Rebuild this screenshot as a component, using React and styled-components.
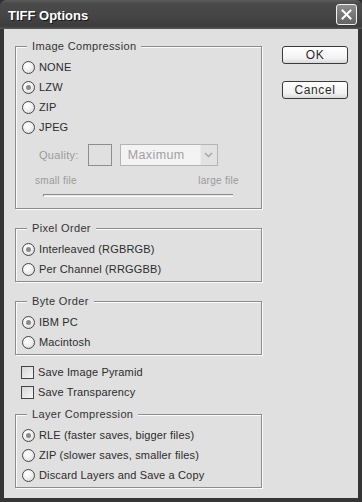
import React from 'react';
import styled, { createGlobalStyle } from 'styled-components';

const GlobalStyle = createGlobalStyle`
  html, body {
    margin: 0;
    padding: 0;
    background: #fff;
  }
  body {
    font-family: "Liberation Sans", Arial, sans-serif;
    font-size: 11px;
    color: #2c2c2c;
  }
`;

const Window = styled.div`
  width: 362px;
  height: 502px;
  display: flex;
  flex-direction: column;
  background: #2e2e2e;
`;

const TitleBar = styled.div`
  height: 29px;
  flex: none;
  display: flex;
  align-items: center;
  justify-content: space-between;
  padding: 0 5px 0 8px;
  background: linear-gradient(#5c5c5c 0%, #4a4a4a 12%, #444 60%, #3c3c3c 90%, #575757 100%);
  border-radius: 6px 6px 0 0;
`;

const Title = styled.div`
  font: bold 13px "Liberation Sans", Arial, sans-serif;
  color: #fff;
  text-shadow: 1px 1px 0 #151515;
  padding-top: 1px;
`;

const CloseButton = styled.div`
  width: 21px;
  height: 21px;
  box-sizing: border-box;
  border: 1px solid #f2f2f2;
  border-radius: 3px;
  background: linear-gradient(#8c8c8c, #646464);
  display: flex;
  align-items: center;
  justify-content: center;
`;

const Frame = styled.div`
  flex: 1;
  display: flex;
  border-style: solid;
  border-color: #353535;
  border-width: 0 4px 4px 4px;
`;

const Body = styled.div`
  flex: 1;
  display: flex;
  align-items: flex-start;
  background: #e0e0e0;
  padding: 17px 0 0 11px;
`;

const LeftColumn = styled.div`
  width: 247px;
  display: flex;
  flex-direction: column;
`;

const Group = styled.div`
  position: relative;
  border: 1px solid #8c8c8c;
  box-shadow: 1px 1px 0 #fbfbfb, inset 1px 1px 0 #fbfbfb;
  padding: 10px 0 ${p => p.$pb || 2}px 0;
  margin-bottom: ${p => p.$mb || 0}px;
  display: flex;
  flex-direction: column;
`;

const Legend = styled.span`
  position: absolute;
  top: -7px;
  left: 11px;
  padding: 0 5px;
  background: #e0e0e0;
  color: #333;
  line-height: 13px;
  letter-spacing: 0.35px;
`;

const OptionRow = styled.label`
  height: 20px;
  display: flex;
  align-items: center;
  gap: 4px;
  padding-left: 6px;
  letter-spacing: 0.15px;
  white-space: nowrap;
`;

const RadioDot = styled.span`
  width: 13px;
  height: 13px;
  box-sizing: border-box;
  border-radius: 50%;
  border: 1px solid #474747;
  background: radial-gradient(circle at 40% 35%, #ffffff 0%, #f1f1f1 45%, #cfcfcf 100%);
  display: flex;
  align-items: center;
  justify-content: center;
  flex: none;
  &::after {
    content: '';
    width: 5px;
    height: 5px;
    border-radius: 50%;
    background: ${p => (p.$checked ? '#8a8a8a' : 'transparent')};
  }
`;

const CheckBox = styled.span`
  width: 13px;
  height: 13px;
  box-sizing: border-box;
  border: 1px solid #444;
  background: linear-gradient(135deg, #d6d6d6, #f6f6f6);
  flex: none;
`;

const QualityRow = styled.div`
  display: flex;
  align-items: center;
  margin-top: 6px;
  padding-left: 23px;
  height: 23px;
`;

const DimText = styled.span`
  color: #9a9a9a;
  letter-spacing: 0.3px;
`;

const QualityBox = styled.div`
  width: 24px;
  height: 22px;
  box-sizing: border-box;
  border: 1px solid #8e8e8e;
  margin-left: 9px;
`;

const Select = styled.div`
  width: 98px;
  height: 22px;
  box-sizing: border-box;
  margin-left: 8px;
  border: 1px solid #b4b4b4;
  background: #f3f3f3;
  display: flex;
  align-items: center;
  color: #a0a0a0;
  font-size: 12.5px;
  letter-spacing: 0.4px;
`;

const SelectValue = styled.span`
  flex: 1;
  padding-left: 7px;
`;

const SelectArrow = styled.span`
  width: 16px;
  height: 100%;
  background: #e2e2e2;
  border-left: 1px solid #ececec;
  display: flex;
  align-items: center;
  justify-content: center;
`;

const SizeLabels = styled.div`
  display: flex;
  justify-content: space-between;
  width: 204px;
  margin: 7px 0 0 19px;
  height: 14px;
  align-items: center;
  font-size: 10px;
`;

const SliderArea = styled.div`
  height: 14px;
  margin: 1px 0 0 27px;
  width: 190px;
  display: flex;
  align-items: center;
`;

const SliderTrack = styled.div`
  flex: 1;
  height: 1px;
  border-top: 1px solid #8a8a8a;
  border-bottom: 1px solid #fafafa;
  border-left: 1px solid #8a8a8a;
  background: #e9e9e9;
`;

const Spacer = styled.div`
  height: ${p => p.$h}px;
`;

const ButtonColumn = styled.div`
  margin-left: 20px;
  display: flex;
  flex-direction: column;
  gap: 17px;
`;

const Button = styled.button`
  width: 66px;
  height: 18px;
  box-sizing: border-box;
  border: 1px solid #3a3a3a;
  border-radius: 3px;
  background: linear-gradient(#ffffff 0%, #f2f2f2 70%, #d9d9d9 100%);
  font-family: "Liberation Sans", Arial, sans-serif;
  font-size: 12px;
  letter-spacing: 0.6px;
  color: #2a2a2a;
  padding: 0;
  line-height: 16px;
`;

const Radio = ({ checked, children }) => (
  <OptionRow>
    <RadioDot $checked={checked} />
    {children}
  </OptionRow>
);

const App = () => {
  return (
    <>
      <GlobalStyle />
      <Window>
        <TitleBar>
          <Title>TIFF Options</Title>
          <CloseButton>
            <svg width="11" height="11" viewBox="0 0 11 11">
              <path d="M1.5 1.5 L9.5 9.5 M9.5 1.5 L1.5 9.5" stroke="#fff" strokeWidth="2" strokeLinecap="square" />
            </svg>
          </CloseButton>
        </TitleBar>
        <Frame>
          <Body>
            <LeftColumn>
              <Group $mb={19} $pb={6}>
                <Legend>Image Compression</Legend>
                <Radio>NONE</Radio>
                <Radio checked>LZW</Radio>
                <Radio>ZIP</Radio>
                <Radio>JPEG</Radio>
                <QualityRow>
                  <DimText>Quality:</DimText>
                  <QualityBox />
                  <Select>
                    <SelectValue>Maximum</SelectValue>
                    <SelectArrow>
                      <svg width="9" height="6" viewBox="0 0 9 6">
                        <path d="M1 1 L4.5 4.5 L8 1" stroke="#a8a8a8" strokeWidth="1.5" fill="none" />
                      </svg>
                    </SelectArrow>
                  </Select>
                </QualityRow>
                <SizeLabels>
                  <DimText>small file</DimText>
                  <DimText>large file</DimText>
                </SizeLabels>
                <SliderArea>
                  <SliderTrack />
                </SliderArea>
              </Group>

              <Group $mb={19}>
                <Legend>Pixel Order</Legend>
                <Radio checked>Interleaved (RGBRGB)</Radio>
                <Radio>Per Channel (RRGGBB)</Radio>
              </Group>

              <Group>
                <Legend>Byte Order</Legend>
                <Radio checked>IBM PC</Radio>
                <Radio>Macintosh</Radio>
              </Group>

              <Spacer $h={7} />
              <OptionRow>
                <CheckBox />
                Save Image Pyramid
              </OptionRow>
              <OptionRow>
                <CheckBox />
                Save Transparency
              </OptionRow>
              <Spacer $h={12} />

              <Group>
                <Legend>Layer Compression</Legend>
                <Radio checked>RLE (faster saves, bigger files)</Radio>
                <Radio>ZIP (slower saves, smaller files)</Radio>
                <Radio>Discard Layers and Save a Copy</Radio>
              </Group>
            </LeftColumn>
            <ButtonColumn>
              <Button>OK</Button>
              <Button>Cancel</Button>
            </ButtonColumn>
          </Body>
        </Frame>
      </Window>
    </>
  );
};

export default App;
